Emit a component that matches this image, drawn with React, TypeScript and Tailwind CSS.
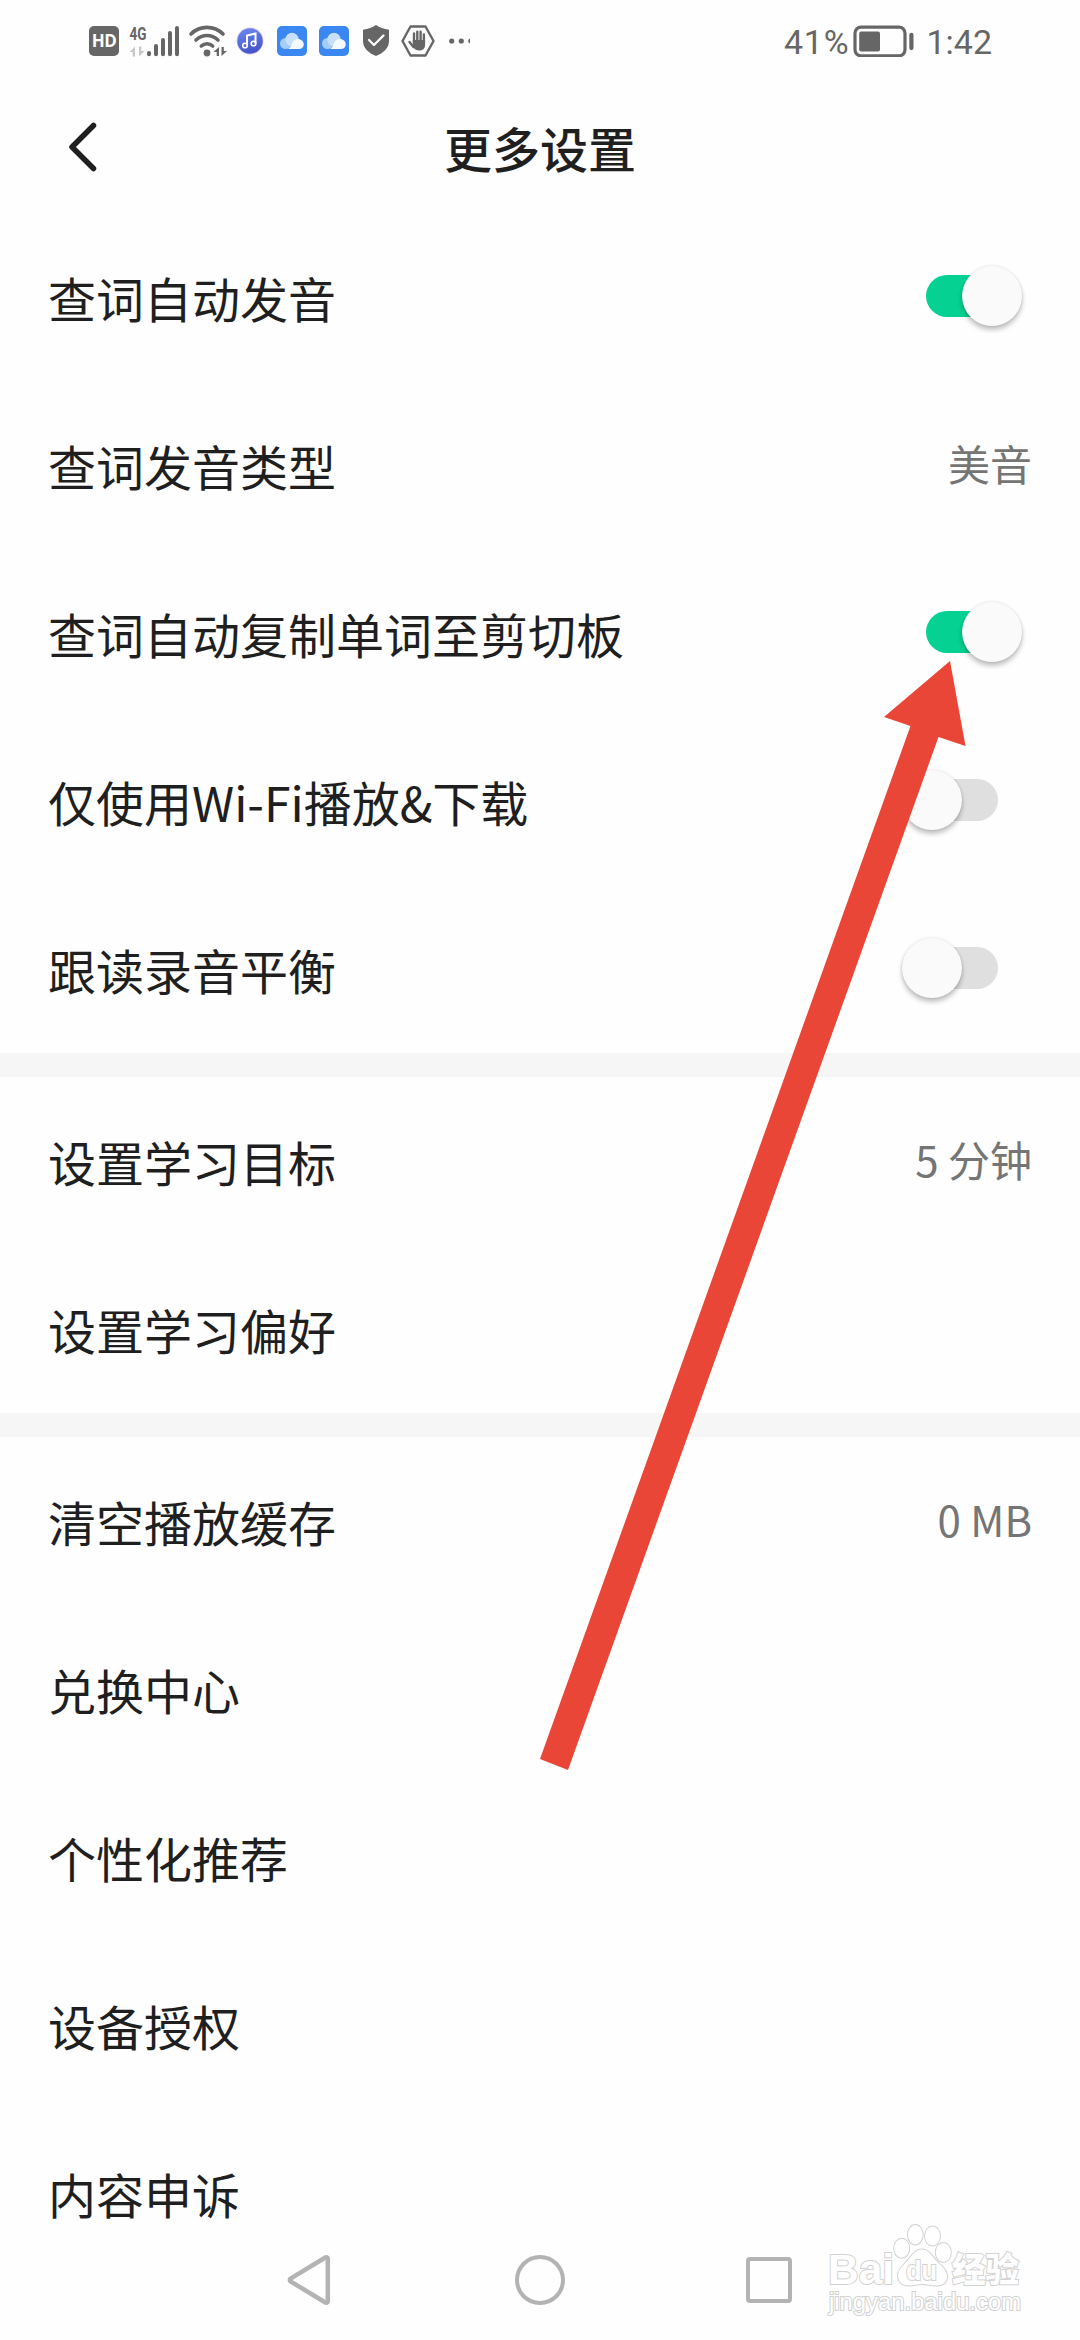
import clsx from "clsx";

type Item = {
  label: string;
  value?: string;
  on?: boolean;
};

const groups: Item[][] = [
  [
    { label: "查词自动发音", on: true },
    { label: "查词发音类型", value: "美音" },
    { label: "查词自动复制单词至剪切板", on: true },
    { label: "仅使用Wi-Fi播放&下载", on: false },
    { label: "跟读录音平衡", on: false },
  ],
  [{ label: "设置学习目标", value: "5 分钟" }, { label: "设置学习偏好" }],
  [
    { label: "清空播放缓存", value: "0 MB" },
    { label: "兑换中心" },
    { label: "个性化推荐" },
    { label: "设备授权" },
    { label: "内容申诉" },
  ],
];

function Signal() {
  return (
    <svg width="50" height="34" viewBox="129 23 50 34" className="ml-[10px]">
      <text
        x="129.5"
        y="38.5"
        fontSize="18"
        fontWeight="700"
        textLength="17"
        lengthAdjust="spacingAndGlyphs"
        fill="#666"
        className="font-['Roboto',sans-serif]"
      >
        4G
      </text>
      <path d="M129.500 51l5.500-5.500v10h-2.300v-4.500zM144.500 50l-5.500 5.500v-10h2.300v4.500z" fill="#c8c8c8" />
      <g stroke="#666" strokeWidth="4" strokeLinecap="round">
        <path d="M149 52v1.300M156 45v8.300M163 39v14.300M170 32v21.300M177 27v26.300" />
      </g>
    </svg>
  );
}

function Wifi() {
  return (
    <svg width="40" height="34" viewBox="188 23 40 34" className="ml-[9px]">
      <g fill="none" stroke="#666" strokeWidth="3.600" strokeLinecap="round">
        <path d="M191 33c9-8.800 23-8.800 32 0" />
        <path d="M196 39c6.500-6 15.500-6 22 0" />
        <path d="M201.300 45c3.500-3 8-3 11.400 0" />
      </g>
      <circle cx="207" cy="52" r="3.400" fill="#666" />
      <path d="M213.500 51l5.500-5v9h-2.300v-4zM227 50l-5.500 5v-9h2.300v4z" fill="#666" />
    </svg>
  );
}

function Music() {
  return (
    <svg width="28" height="28" viewBox="236 27 28 28" className="ml-2">
      <defs>
        <linearGradient id="music" x1="0" y1="0" x2="0.300" y2="1">
          <stop offset="0" stopColor="#6f8cf0" />
          <stop offset="1" stopColor="#4556c8" />
        </linearGradient>
      </defs>
      <circle cx="250" cy="41" r="13.500" fill="#e3c9f5" />
      <circle cx="250" cy="41" r="12.700" fill="url(#music)" />
      <path d="M247 45.500V35.500l8.500-2v10" fill="none" stroke="#fff" strokeWidth="2" />
      <circle cx="245" cy="45.500" r="2.300" fill="none" stroke="#fff" strokeWidth="1.600" />
      <circle cx="253.500" cy="43.500" r="2.300" fill="none" stroke="#fff" strokeWidth="1.600" />
    </svg>
  );
}

function Cloud({ className }: { className: string }) {
  return (
    <svg width="30" height="30" viewBox="0 0 30 30" className={className}>
      <rect width="30" height="30" rx="5" fill="#3a87f2" />
      <circle cx="8.500" cy="17.500" r="5.500" fill="#a5cdfb" />
      <circle cx="15" cy="13.500" r="6.700" fill="#c8e0fd" />
      <path
        d="M11 23c3-1.500 3-4.500 5-7.500 2-3 6.500-3.500 9-1 3.500 3.500 1.500 8.500-3 8.500z"
        fill="#f3f9ff"
      />
    </svg>
  );
}

function Shield() {
  return (
    <svg width="26" height="31" viewBox="0 0 26 31" className="ml-[14px]">
      <path
        d="M13 0c3.500 2.500 8 4 13 4.700V16c0 7-5.500 12-13 15C5.500 28 0 23 0 16V4.700C5 4 9.500 2.500 13 0z"
        fill="#666"
      />
      <path
        d="M6 15l5 5 9.500-9.500"
        fill="none"
        stroke="#fff"
        strokeWidth="2.300"
        strokeLinecap="round"
        strokeLinejoin="round"
      />
    </svg>
  );
}

function Hand() {
  return (
    <svg width="34" height="32" viewBox="0 0 34 32" className="ml-3">
      <path
        d="M9.500 1.500h15L32.500 16l-8 14.500h-15L1.500 16z"
        fill="none"
        stroke="#666"
        strokeWidth="2.400"
        strokeLinejoin="round"
      />
      <g stroke="#666" strokeWidth="2.400" strokeLinecap="round">
        <path d="M13 8.500V17M16.300 6.800V17M19.600 6.800V17M22.900 9.500V18M8.500 17l4 5" />
      </g>
      <path d="M11.800 15h12.300v5c0 3-2 5.500-5.500 5.500-3.500 0-5.600-1.500-6.800-4.500z" fill="#666" />
    </svg>
  );
}

function Battery() {
  return (
    <svg width="61" height="32" viewBox="853 24 61 32" className="ml-[4px]">
      <rect x="855" y="26.200" width="50" height="28.600" rx="6" fill="none" stroke="#666" strokeWidth="3.200" />
      <rect x="859.200" y="30.600" width="20.800" height="20" rx="2" fill="#666" />
      <rect x="909.300" y="31.700" width="4.200" height="17.500" rx="2.100" fill="#666" />
    </svg>
  );
}

function StatusBar() {
  return (
    <div className="flex h-[81px] items-center pl-[89px] pr-[88px] font-['Roboto',sans-serif] text-[34px] leading-none text-[#666]">
      <div className="flex size-[30px] items-center justify-center rounded-[5px] bg-[#666] font-['Open_Sans',sans-serif] text-[17px] font-bold tracking-[-0.5px] text-white">
        HD
      </div>
      <Signal />
      <Wifi />
      <Music />
      <Cloud className="ml-[13px]" />
      <Cloud className="ml-3" />
      <Shield />
      <Hand />
      <svg width="22" height="6" viewBox="0 0 22 6" fill="#666" className="ml-[14px]">
        <circle cx="2.700" cy="3" r="2.600" />
        <circle cx="12.300" cy="3" r="2.600" />
        <path d="M21 .5v5a2.600 2.600 0 0 1 0-5z" />
      </svg>
      <div className="ml-auto pt-[3px] tracking-[0.800px]">41%</div>
      <Battery />
      <div className="ml-3 pt-[3px]">1:42</div>
    </div>
  );
}

function Toggle({ on }: { on: boolean }) {
  return (
    <div
      className={clsx(
        "relative mr-[34px] h-[42px] w-[72px] rounded-full",
        on ? "bg-[#04d192]" : "bg-[#dfdfdf]"
      )}
    >
      <div
        className={clsx(
          "absolute top-[-9px] size-[60px] rounded-full bg-[#fafafa] shadow-[0_4px_5px_rgba(0,0,0,0.24),0_0_3px_rgba(0,0,0,0.12)]",
          on ? "left-[36px]" : "left-[-24px]"
        )}
      />
    </div>
  );
}

function Row({ item }: { item: Item }) {
  return (
    <div className="flex h-[168px] items-center justify-between px-12 pb-[2px]">
      <div className="pt-px text-[48px] leading-[72px]">{item.label}</div>
      {item.value && (
        <div className="pb-[3px] text-[42px] leading-[62px] text-[#757575]">{item.value}</div>
      )}
      {item.on !== undefined && <Toggle on={item.on} />}
    </div>
  );
}

function NavBar() {
  return (
    <div className="flex h-[120px] shrink-0 items-center pl-[285px]">
      <svg width="48" height="54" viewBox="0 0 48 54" fill="none" stroke="#b3b3b3" strokeWidth="4.500" strokeLinejoin="round">
        <path d="M42.800 5.500v43a1.600 1.600 0 0 1-2.500 1L5.500 28.300a1.600 1.600 0 0 1 0-2.600L40.300 4.500a1.600 1.600 0 0 1 2.500 1z" />
      </svg>
      <div className="ml-[182px] size-[50px] rounded-full border-[4.500px] border-[#b3b3b3]" />
      <div className="ml-[181px] size-[46px] rounded-[4px] border-[4.500px] border-[#b3b3b3]" />
    </div>
  );
}

function Watermark() {
  return (
    <svg
      width="216"
      height="100"
      viewBox="818 2222 216 100"
      fill="#fff"
      stroke="#d2d2d2"
      strokeWidth="2"
      paintOrder="stroke"
      className="absolute left-[818px] top-[2222px] overflow-visible font-['Liberation_Sans','Noto_Sans_CJK_SC',sans-serif]"
    >
      <text x="828" y="2284" fontSize="43" fontWeight="700" textLength="66" lengthAdjust="spacingAndGlyphs">
        Bai
      </text>
      <ellipse cx="915.300" cy="2234.700" rx="7.300" ry="9.700" />
      <ellipse cx="932.500" cy="2236" rx="7.500" ry="9.500" />
      <ellipse cx="901.700" cy="2248.300" rx="7.500" ry="9.500" />
      <ellipse cx="943.300" cy="2252.500" rx="7.500" ry="9.500" />
      <path d="M922 2249.500c8 0 10 8 17 14 5 4 8 9 8 13 0 6-4 9-11 9-5 0-9-1.500-14-1.500s-8 1.500-13 1.500c-7 0-11-4-11-10 0-5 4-9 8-13 6-6 8-13 16-13z" />
      <text x="906" y="2280" fontSize="27" textLength="31" lengthAdjust="spacingAndGlyphs" fontWeight="700">
        du
      </text>
      <text x="952" y="2282" fontSize="34" fontWeight="900" textLength="67" lengthAdjust="spacingAndGlyphs">
        经验
      </text>
      <text x="829" y="2310" fontSize="23" textLength="192" lengthAdjust="spacingAndGlyphs">
        jingyan.baidu.com
      </text>
    </svg>
  );
}

export default function App() {
  return (
    <main
      lang="zh-CN"
      className="relative flex h-[2340px] w-[1080px] flex-col overflow-hidden bg-[#fefefe] font-['Noto_Sans_CJK_SC',sans-serif] text-[#1f1f1f]"
    >
      <StatusBar />
      <header className="grid h-[132px] shrink-0 grid-cols-[1fr_auto_1fr] items-center px-[66px]">
        <svg width="34" height="54" viewBox="0 0 34 54" fill="none" stroke="#1f1f1f" strokeWidth="5.500" strokeLinecap="round" strokeLinejoin="round">
          <path d="M27.500 5.500L6 27l21.500 21.500" />
        </svg>
        <h1 className="pb-px text-[48px] font-medium leading-[72px]">更多设置</h1>
      </header>
      <div className="min-h-0 flex-1">
        {groups.map((items, i) => (
          <section key={i} className={clsx(i > 0 && "border-t-[24px] border-[#f6f6f6]")}>
            {items.map((item) => (
              <Row key={item.label} item={item} />
            ))}
          </section>
        ))}
      </div>
      <NavBar />
      <Watermark />
      {/* red pointer towards the clipboard switch */}
      <svg width="1080" height="2340" className="pointer-events-none absolute inset-0">
        <path d="M950 661L884 717l26.500 9L540 1759l28 11L938.500 737l27 9z" fill="#e94637" />
      </svg>
    </main>
  );
}
